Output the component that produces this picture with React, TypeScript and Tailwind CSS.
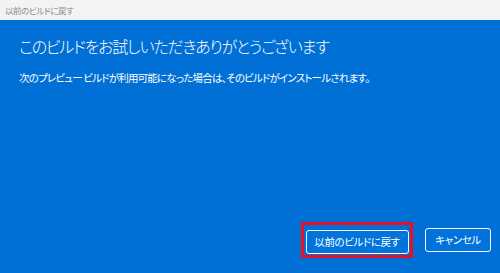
export default function App() {
  return (
    <div
      className="w-[500px] h-[273px] flex flex-col overflow-hidden [font-feature-settings:'palt']"
      style={{ fontFamily: '"Noto Sans CJK JP", "Noto Sans", sans-serif' }}
    >
      <div className="h-[20px] bg-[#f3f3f3] flex items-center px-[5px]">
        <span className="text-[8.5px] leading-none tracking-[-0.4px] text-[#8a8a8a]">以前のビルドに戻す</span>
      </div>

      <div className="flex-1 bg-[#0070d7] flex flex-col text-white px-[19px]">
        <h1 className="mt-[15px] text-[16px] leading-[22px] tracking-[-1.2px] font-light">
          このビルドをお試しいただきありがとうございます
        </h1>
        <p className="mt-[14px] text-[10.5px] leading-[14px] tracking-[-0.8px]">
          次のプレビュー ビルドが利用可能になった場合は、そのビルドがインストールされます。
        </p>

        <div className="mt-auto mb-[15px] -mr-[10px] flex justify-end items-center gap-[12px]">
          <div className="border-[3px] border-[#e81123] p-[1.5px]">
            <button className="w-[103px] h-[24px] rounded-[3px] border-[1.5px] border-white bg-[#0074dc] text-[10.5px] tracking-[-0.4px] text-white">
              以前のビルドに戻す
            </button>
          </div>
          <button className="w-[66px] h-[24px] rounded-[3px] border-[1.5px] border-white bg-[#0074dc] text-[10.5px] tracking-[-0.4px] text-white">
            キャンセル
          </button>
        </div>
      </div>
    </div>
  );
}
